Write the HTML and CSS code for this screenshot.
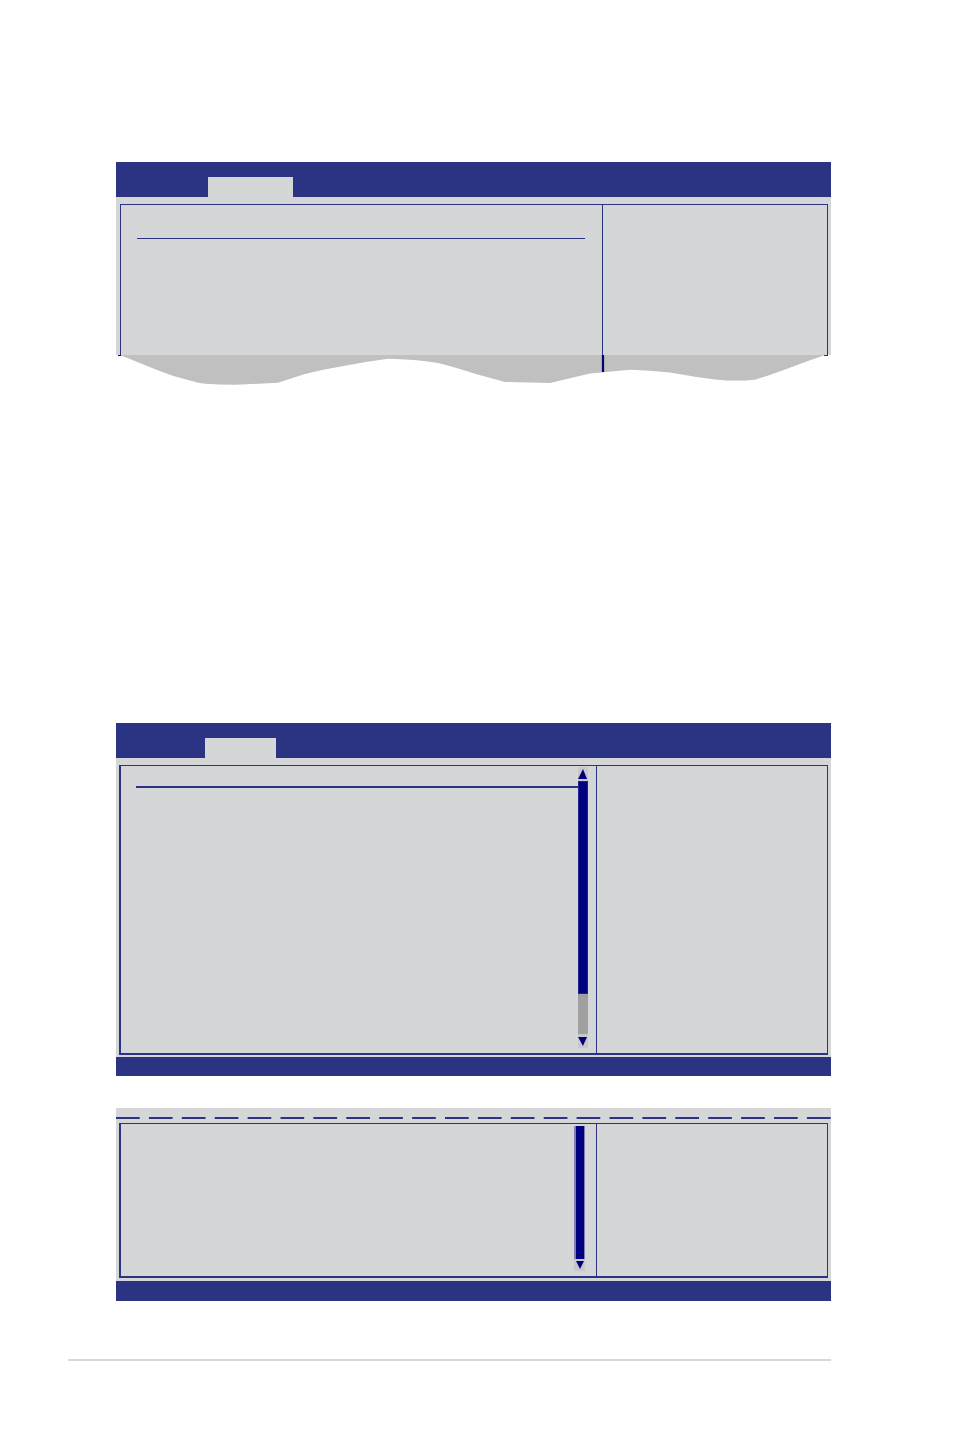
FILE: index.html
```
<!DOCTYPE html>
<html lang="en">
  <head>
    <meta charset="UTF-8" />
    <meta name="viewport" content="width=device-width, initial-scale=1.0" />
    <title>BIOS Setup</title>
    <link rel="stylesheet" href="styles.css">
  </head>
  <body>
    <main class="page">
      <section class="panel panel-cut">
        <header class="menu-bar">
          <button class="tab" aria-label="Menu tab"></button>
        </header>
        <div class="panel-body">
          <div class="frame">
            <div class="content">
              <hr class="rule" />
            </div>
            <aside class="help"></aside>
          </div>
        </div>
        <!-- torn bottom edge -->
        <svg class="wave" viewBox="0 0 715 30" preserveAspectRatio="none" aria-hidden="true">
          <path fill="#c0c0c0" d="M4 0 L41 15 Q57 21.500 72 25 Q82 28 89 28.700 Q108 30 126 29.600 L162 27.700 L189 19 Q204 15 222 12 Q246 7 272 3.700 Q298 4 322 8 Q338 12 359 18.700 L389 27 L434 28 L474 18.500 L514 14.700 Q534 15.500 554 17.500 Q578 22 601 24.700 Q621 26.500 639 24.700 Q658 19 687 7.700 L709 0 Z" />
          <path fill="#a8a8a8" d="M485 0h4v17h-4z" />
          <path fill="#000080" d="M486 0h2v17h-2zM2 0h3v1h-3z" />
          <path fill="#2b3482" d="M708 0h4v1h-4z" />
        </svg>
      </section>

      <section class="panel panel-menu">
        <header class="menu-bar">
          <button class="tab" aria-label="Menu tab"></button>
        </header>
        <div class="panel-body">
          <div class="frame">
            <div class="content">
              <hr class="rule" />
            </div>
            <div class="scrollbar">
              <button class="arrow" aria-label="Scroll up">
                <svg viewBox="0 0 10 14"><path d="M0 12 L5 2 L9 12z" /></svg>
              </button>
              <div class="track">
                <div class="thumb"></div>
              </div>
              <button class="arrow" aria-label="Scroll down">
                <svg viewBox="0 0 10 14"><path d="M0 3 L9 3 L5 12z" /></svg>
              </button>
            </div>
            <aside class="help"></aside>
          </div>
        </div>
        <footer class="key-bar"></footer>
      </section>

      <section class="panel panel-more">
        <svg class="dashes" viewBox="0 0 715 2" preserveAspectRatio="none" aria-hidden="true">
          <path d="M0 1H715" stroke="#2b3482" stroke-width="2" stroke-dasharray="23.700 9.200" />
        </svg>
        <div class="panel-body">
          <div class="frame">
            <div class="content"></div>
            <div class="scrollbar">
              <div class="track">
                <div class="thumb"></div>
              </div>
              <button class="arrow" aria-label="Scroll down">
                <svg viewBox="0 0 11 12"><path d="M2 2 L10 2 L6 10z" /></svg>
              </button>
            </div>
            <aside class="help"></aside>
          </div>
        </div>
        <footer class="key-bar"></footer>
      </section>
    </main>
    <hr class="page-rule" />
  </body>
</html>
```

FILE: styles.css
```
:root {
  --blue: #2b3482;
  --navy: #000080;
  --gray: #d5d6d8;
  --silver: #c0c0c0;
  --track: #a0a0a0;
  --line: #d9d9d9;
}

* {
  margin: 0;
  padding: 0;
  box-sizing: border-box;
}

body {
  background: #fff;
  font-family: "Liberation Sans", Arial, sans-serif;
}

button,
hr {
  border: none;
}

svg {
  display: block;
  width: 100%;
}

.page {
  padding: 162px 123px 0 116px;
}

.panel {
  background: var(--gray);
}

.menu-bar {
  display: flex;
  align-items: flex-end;
  height: 35px;
  padding-left: 89px;
  background: var(--blue);
}

.tab {
  width: 71px;
  height: 20px;
  background: var(--gray);
}

.panel-body {
  padding: 7px 3px 2px;
}

.frame {
  display: flex;
  min-height: 290px;
  border: 1px solid var(--blue);
  border-width: 1px 1px 2px 2px;
}

.content {
  flex: 1;
  padding: 20px 0 0 15px;
}

.rule {
  height: 2px;
  background: var(--blue);
}

.help {
  width: 231px;
  border-left: 1px solid var(--blue);
}

.key-bar {
  height: 19px;
  background: var(--blue);
}

/* scrollbar */
.scrollbar {
  display: flex;
  flex-direction: column;
  width: 10px;
  margin: 1px 8px 5px 0;
}

.arrow {
  height: 14px;
  background: #c8c8c8;
}

.arrow svg {
  height: 100%;
  fill: var(--navy);
}

.track {
  flex: 1;
  background: var(--track);
}

.thumb {
  height: 84%;
  background: var(--navy);
  border: 1px solid #22228c;
}

/* first panel, cut off below the frame */
.panel-cut {
  margin-bottom: 338px;
}

.panel-cut .menu-bar {
  padding-left: 92px;
}

.panel-cut .tab {
  width: 85px;
}

.panel-cut .panel-body {
  padding: 7px 3px 0 4px;
}

.panel-cut .frame {
  min-height: 151px;
  border-width: 1px 1px 0;
}

.panel-cut .content {
  padding: 33px 17px 0 16px;
}

.panel-cut .rule {
  height: 1px;
}

.panel-cut .help {
  width: 225px;
}

.wave {
  height: 30px;
  background: #fff;
}

/* continued panel */
.panel-more {
  margin-top: 32px;
  padding-top: 9px;
}

.dashes {
  height: 2px;
}

.panel-more .panel-body {
  padding: 4px 3px 3px;
}

.panel-more .frame {
  min-height: 155px;
}

.panel-more .scrollbar {
  width: 11px;
  margin: 2px 11px 5px 0;
}

.panel-more .arrow {
  height: 12px;
}

.panel-more .thumb {
  height: 100%;
  border: 0 solid #8080b0;
  border-left-width: 2px;
  border-right-width: 1px;
}

.panel-more .key-bar {
  height: 20px;
}

.page-rule {
  height: 2px;
  margin: 58px 123px 0 68px;
  background: var(--line);
}
```
